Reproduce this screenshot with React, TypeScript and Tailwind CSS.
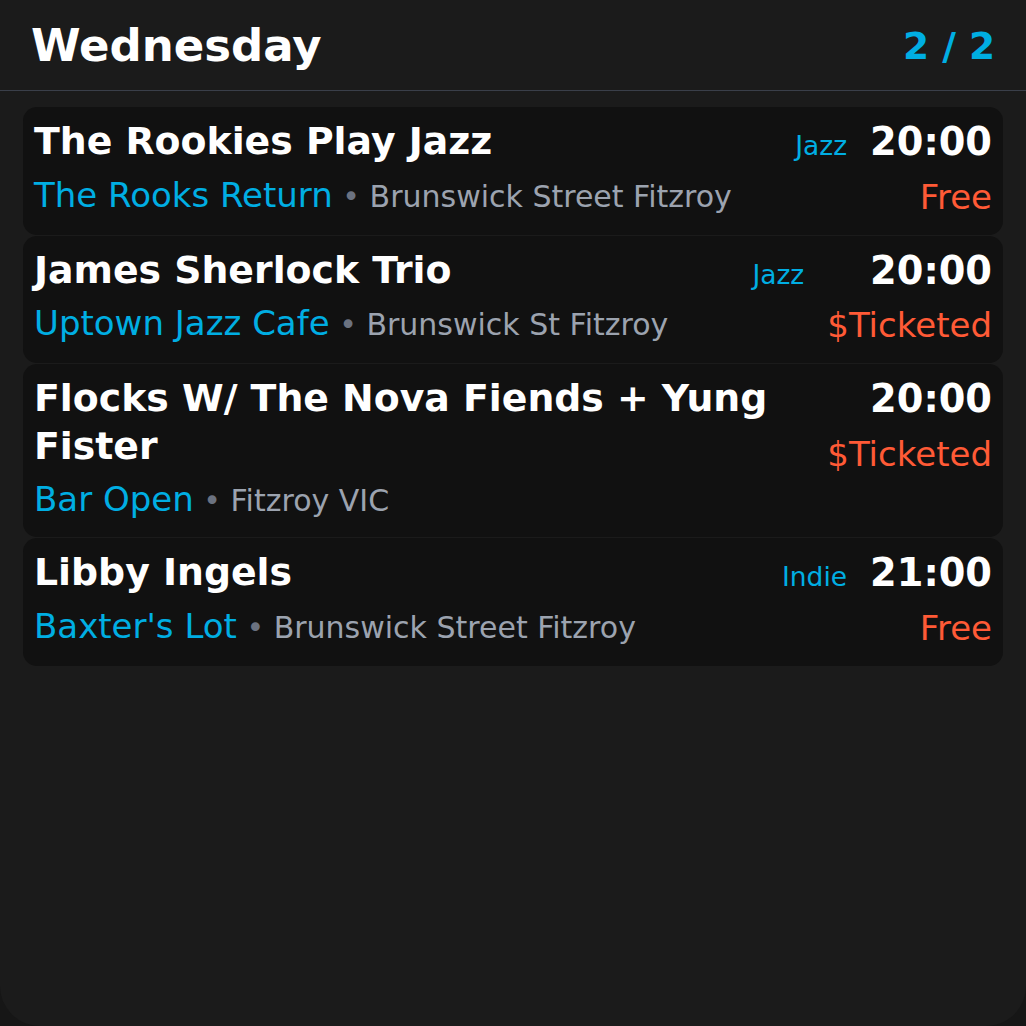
const events = [
  {
    title: 'The Rookies Play Jazz',
    venue: 'The Rooks Return',
    location: 'Brunswick Street Fitzroy',
    genre: 'Jazz',
    time: '20:00',
    price: 'Free',
  },
  {
    title: 'James Sherlock Trio',
    venue: 'Uptown Jazz Cafe',
    location: 'Brunswick St Fitzroy',
    genre: 'Jazz',
    time: '20:00',
    price: '$Ticketed',
  },
  {
    title: 'Flocks W/ The Nova Fiends + Yung Fister',
    venue: 'Bar Open',
    location: 'Fitzroy VIC',
    genre: '',
    time: '20:00',
    price: '$Ticketed',
  },
  {
    title: 'Libby Ingels',
    venue: "Baxter's Lot",
    location: 'Brunswick Street Fitzroy',
    genre: 'Indie',
    time: '21:00',
    price: 'Free',
  },
];

export default function App() {
  return (
    <div
      className="w-[1026px] h-[1026px] bg-[#161616]"
      style={{ fontFamily: '"DejaVu Sans", "Noto Sans", sans-serif' }}
    >
      <div className="flex h-full flex-col rounded-b-[40px] bg-[#1b1b1b]">
        {/* ── Header ── */}
        <div className="flex items-center justify-between border-b border-[#3a3f4a] px-[31px] pt-[16px] pb-[14px]">
          <h1 className="text-[45px] leading-[60px] font-bold text-white">Wednesday</h1>
          <span className="text-[37.5px] leading-[60px] font-bold text-[#00aee3]">2 / 2</span>
        </div>

        {/* ── Events ── */}
        <div className="flex flex-col gap-px px-[23px] pt-[16px]">
          {events.map((ev) => (
            <div
              key={ev.title}
              className="flex items-start rounded-[14px] bg-[#111111] px-[11px] pt-[11px] pb-[12px]"
            >
              <div className="min-w-0 flex-1 pr-[24px]">
                <div className="text-[37.8px] leading-[47.5px] font-bold text-white">{ev.title}</div>
                <div className="mt-[3px] text-[34px] leading-[52px] whitespace-nowrap">
                  <span className="text-[#00aee3]">{ev.venue}</span>
                  <span className="text-[30px] leading-[30px] text-[#6b7280]"> • </span>
                  <span className="text-[30px] leading-[30px] text-[#9ca3af]">{ev.location}</span>
                </div>
              </div>
              {ev.genre && (
                <div className="mr-[23px] pt-[4px] text-[26.5px] leading-[47.5px] text-[#00aee3]">
                  {ev.genre}
                </div>
              )}
              <div className="flex flex-col items-end">
                <div className="text-[38.3px] leading-[47.5px] font-bold text-white">{ev.time}</div>
                <div className="mt-[5px] text-[34px] leading-[52px] text-[#ff5a36]">{ev.price}</div>
              </div>
            </div>
          ))}
        </div>
      </div>
    </div>
  );
}
